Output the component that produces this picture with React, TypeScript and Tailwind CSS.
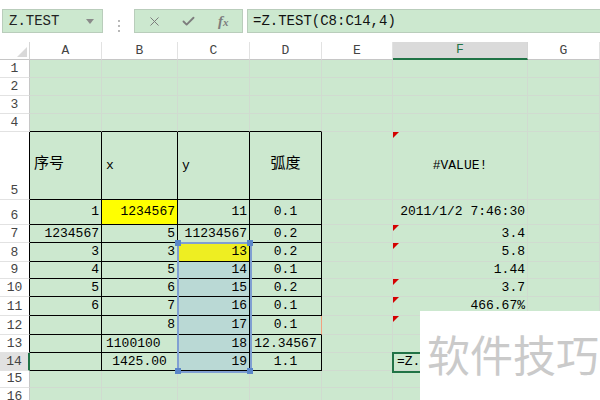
import React from "react";
import { X, Check } from "lucide-react";

type Cell = {
  t?: string;
  a?: "l" | "r" | "c";
  bg?: string;
  tri?: boolean;
  big?: boolean;
};

type Row = {
  n: number;
  h: string;
  cells: Record<string, Cell>;
};

const cols = [
  { k: "A", w: "w-[72px]" },
  { k: "B", w: "w-[76px]" },
  { k: "C", w: "w-[72px]" },
  { k: "D", w: "w-[72px]" },
  { k: "E", w: "w-[71px]" },
  { k: "F", w: "w-[135px]" },
  { k: "G", w: "w-[72px]" },
];

const yellow = "bg-[#ffff00]";
const sel = "bg-[#bad9d5]";

const rows: Row[] = [
  { n: 1, h: "h-[18px]", cells: {} },
  { n: 2, h: "h-[18px]", cells: {} },
  { n: 3, h: "h-[18px]", cells: {} },
  { n: 4, h: "h-[18px]", cells: {} },
  {
    n: 5,
    h: "h-[68px]",
    cells: {
      A: { t: "序号", a: "l", big: true },
      B: { t: "x", a: "l" },
      C: { t: "y", a: "l" },
      D: { t: "弧度", a: "c", big: true },
      F: { t: "#VALUE!", a: "c", tri: true },
    },
  },
  {
    n: 6,
    h: "h-[25px]",
    cells: {
      A: { t: "1", a: "r" },
      B: { t: "1234567", a: "r", bg: yellow },
      C: { t: "11", a: "r" },
      D: { t: "0.1", a: "c" },
      F: { t: "2011/1/2 7:46:30", a: "r" },
    },
  },
  {
    n: 7,
    h: "h-[18px]",
    cells: {
      A: { t: "1234567", a: "r" },
      B: { t: "5", a: "r" },
      C: { t: "11234567", a: "r" },
      D: { t: "0.2", a: "c" },
      F: { t: "3.4", a: "r", tri: true },
    },
  },
  {
    n: 8,
    h: "h-[19px]",
    cells: {
      A: { t: "3", a: "r" },
      B: { t: "3", a: "r" },
      C: { t: "13", a: "r", bg: "bg-[#eeee22]" },
      D: { t: "0.2", a: "c" },
      F: { t: "5.8", a: "r", tri: true },
    },
  },
  {
    n: 9,
    h: "h-[17px]",
    cells: {
      A: { t: "4", a: "r" },
      B: { t: "5", a: "r" },
      C: { t: "14", a: "r", bg: sel },
      D: { t: "0.1", a: "c" },
      F: { t: "1.44", a: "r" },
    },
  },
  {
    n: 10,
    h: "h-[18px]",
    cells: {
      A: { t: "5", a: "r" },
      B: { t: "6", a: "r" },
      C: { t: "15", a: "r", bg: sel },
      D: { t: "0.2", a: "c" },
      F: { t: "3.7", a: "r", tri: true },
    },
  },
  {
    n: 11,
    h: "h-[19px]",
    cells: {
      A: { t: "6", a: "r" },
      B: { t: "7", a: "r" },
      C: { t: "16", a: "r", bg: sel },
      D: { t: "0.1", a: "c" },
      F: { t: "466.67%", a: "r", tri: true },
    },
  },
  {
    n: 12,
    h: "h-[19px]",
    cells: {
      B: { t: "8", a: "r" },
      C: { t: "17", a: "r", bg: sel },
      D: { t: "0.1", a: "c" },
      F: { tri: true },
    },
  },
  {
    n: 13,
    h: "h-[18px]",
    cells: {
      B: { t: "1100100", a: "l" },
      C: { t: "18", a: "r", bg: sel },
      D: { t: "12.34567", a: "c" },
    },
  },
  {
    n: 14,
    h: "h-[18px]",
    cells: {
      B: { t: "1425.00", a: "c" },
      C: { t: "19", a: "r", bg: sel },
      D: { t: "1.1", a: "c" },
      F: { t: "=Z.", a: "l" },
    },
  },
  { n: 15, h: "h-[17px]", cells: {} },
  { n: 16, h: "h-[18px]", cells: {} },
];

const inTable = (k: string, n: number) =>
  ["A", "B", "C", "D"].includes(k) && n >= 5 && n <= 14;

function borderFor(k: string, n: number) {
  let r = "border-r-[#d0dbd0]";
  let b = "border-b-[#d0dbd0]";
  if (inTable(k, n)) {
    r = "border-r-black";
    b = "border-b-black";
  }
  if (n === 4 && ["A", "B", "C", "D"].includes(k)) b = "border-b-black";
  if (k === "D" && n === 12) r = "border-r-[#f2a07f]";
  return `${r} ${b}`;
}

const alignFor = (a?: string) =>
  a === "r"
    ? "justify-end pr-[2px]"
    : a === "c"
      ? "justify-center"
      : "justify-start pl-[4px]";

export default function App() {
  return (
    <div className="relative w-[600px] h-[400px] overflow-hidden bg-white text-black font-['Liberation_Mono','Noto_Sans_CJK_SC',monospace]">
      {/* formula bar */}
      <div className="flex h-[42px] pt-[9px]">
        <div className="ml-[2px] w-[101px] h-[24px] border border-[#b9cdbb] bg-[#cce8cf] flex items-center pl-[6px] pr-[6px] text-[14px] text-[#222]">
          <span className="flex-1">Z.TEST</span>
          <span className="w-0 h-0 border-l-[4px] border-r-[4px] border-t-[5px] border-l-transparent border-r-transparent border-t-[#8a8a8a] mr-[2px]" />
        </div>
        <div className="w-[31px] flex flex-col items-center justify-center gap-[3px]">
          <span className="w-[2px] h-[2px] bg-[#b8b8b8]" />
          <span className="w-[2px] h-[2px] bg-[#b8b8b8]" />
          <span className="w-[2px] h-[2px] bg-[#b8b8b8]" />
        </div>
        <div className="w-[109px] h-[24px] border border-[#b9cdbb] bg-[#cce8cf] flex items-center pl-[12px]">
          <X className="w-[15px] h-[15px] text-[#7d7d7d]" strokeWidth={1.6} />
          <Check className="ml-[19px] w-[15px] h-[15px] text-[#7d7d7d]" strokeWidth={3} />
          <span className="ml-[22px] font-['Liberation_Serif',serif] italic font-bold text-[#7d7d7d] text-[15px] leading-none">
            f<span className="text-[11px]">x</span>
          </span>
        </div>
        <div className="ml-[4px] flex-1 h-[24px] border border-r-0 border-[#b9cdbb] bg-[#cce8cf] flex items-center pl-[5px] text-[14px] text-[#111]">
          =Z.TEST(C8:C14,4)
        </div>
      </div>

      {/* column headers */}
      <div className="flex h-[18px] text-[13px] text-[#444]">
        <div className="relative w-[30px] border-r border-b border-r-[#d6d6d6] border-b-[#c6c6c6]">
          <span className="absolute right-[2px] bottom-[2px] w-0 h-0 border-l-[10px] border-b-[10px] border-l-transparent border-b-[#d9d9d9]" />
        </div>
        {cols.map((c) => (
          <div
            key={c.k}
            className={`${c.w} flex items-center justify-center ${
              c.k === "F"
                ? "bg-[#dadada] border-b-2 border-b-[#217346] text-[#217346] border-r border-r-[#d6d6d6]"
                : "border-r border-b border-r-[#e2e2e2] border-b-[#c6c6c6]"
            }`}
          >
            {c.k}
          </div>
        ))}
      </div>

      {/* rows */}
      {rows.map((r) => (
        <div key={r.n} className={`flex ${r.h} text-[13px]`}>
          <div
            className={`w-[30px] flex items-end justify-center pb-[1px] leading-[15px] text-[#444] border-b border-b-[#e2e2e2] ${
              r.n === 14
                ? "bg-[#e1e1e1] border-r-2 border-r-[#217346]"
                : r.n >= 5 && r.n <= 13
                  ? "border-r border-r-black"
                  : "border-r border-r-[#c6c6c6]"
            }`}
          >
            {r.n}
          </div>
          {cols.map((c) => {
            const cell = r.cells[c.k] || {};
            return (
              <div
                key={c.k}
                className={`relative ${c.w} flex items-center whitespace-nowrap border-r border-b ${borderFor(
                  c.k,
                  r.n
                )} ${alignFor(cell.a)} ${cell.bg || "bg-[#cce8cf]"} ${
                  cell.big ? "text-[15px]" : ""
                }`}
              >
                {cell.tri && (
                  <span className="absolute top-0 left-0 w-0 h-0 border-t-[6px] border-r-[6px] border-t-[#d40000] border-r-transparent" />
                )}
                {cell.t}
              </div>
            );
          })}
        </div>
      ))}

      {/* range highlight C8:C14 */}
      <div className="absolute left-[177px] top-[242px] w-[75px] h-[131px] border-2 border-[#809fd2] pointer-events-none" />
      <span className="absolute left-[175px] top-[240px] w-[6px] h-[6px] bg-[#5b87c9]" />
      <span className="absolute left-[247px] top-[240px] w-[6px] h-[6px] bg-[#5b87c9]" />
      <span className="absolute left-[175px] top-[368px] w-[6px] h-[6px] bg-[#5b87c9]" />
      <span className="absolute left-[247px] top-[368px] w-[6px] h-[6px] bg-[#5b87c9]" />

      {/* active cell F14 */}
      <div className="absolute left-[392px] top-[352px] w-[137px] h-[21px] border-2 border-[#217346]" />

      {/* watermark */}
      <div className="absolute left-[420px] top-[311px] w-[180px] h-[89px] bg-white pl-[7px] pt-[14px] overflow-hidden">
        <span className="whitespace-nowrap font-['Noto_Sans_CJK_SC',sans-serif] text-[43px] leading-[56px] text-[#cacaca]">
          软件技巧
        </span>
      </div>
    </div>
  );
}
